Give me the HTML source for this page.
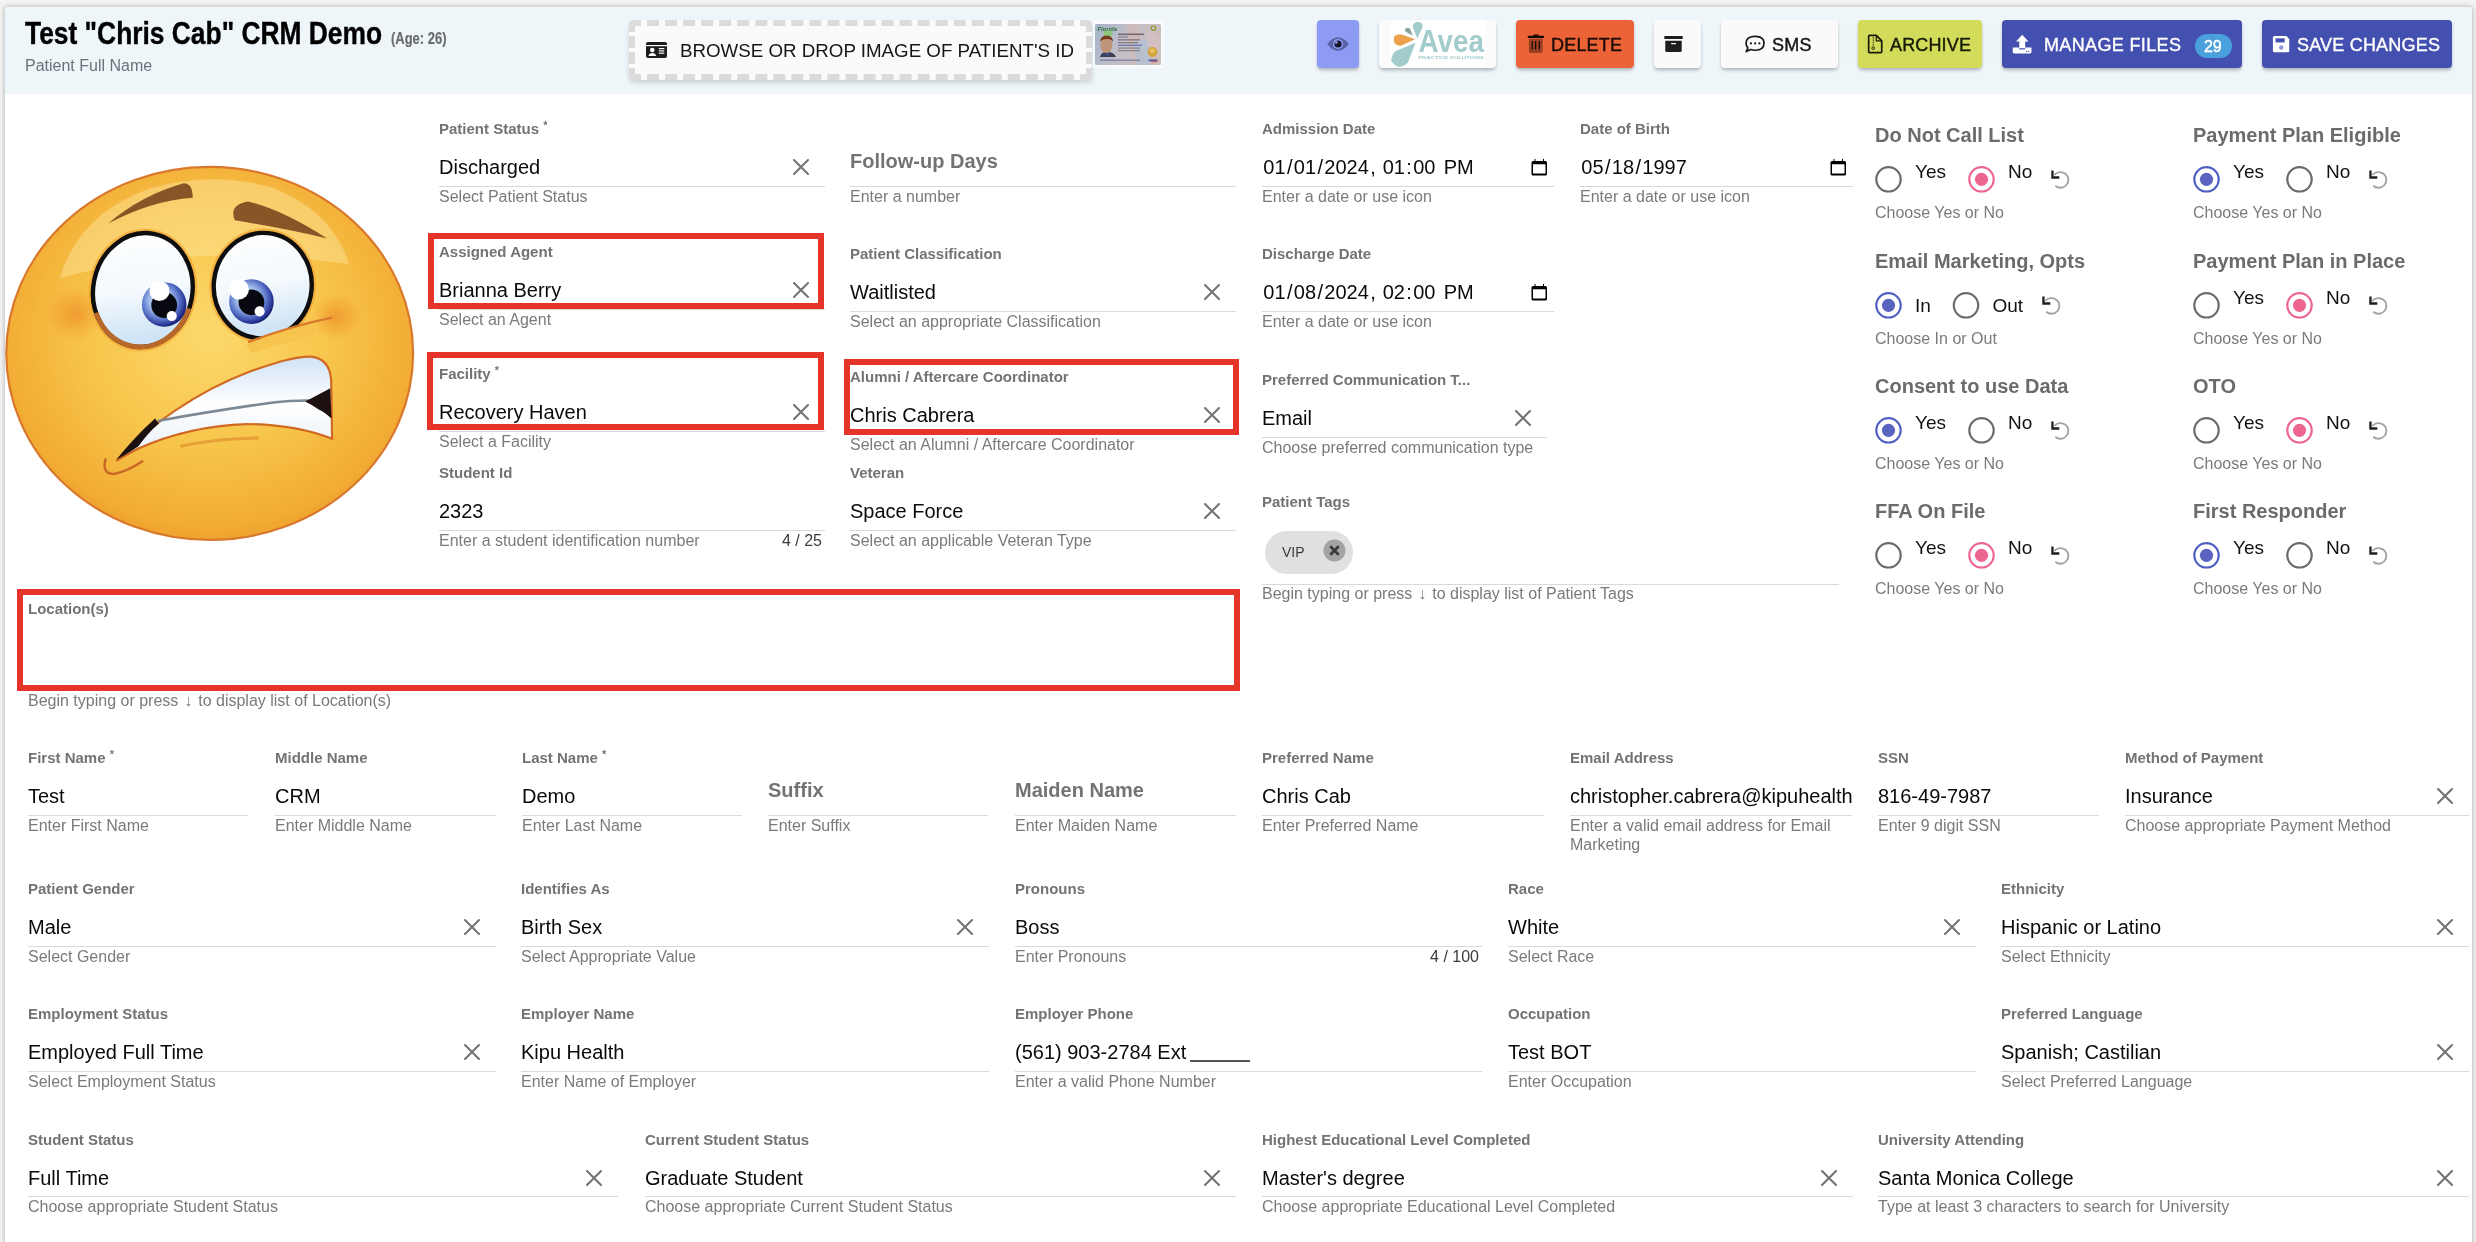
<!DOCTYPE html><html><head><meta charset="utf-8"><style>
html,body{margin:0;padding:0;-webkit-font-smoothing:antialiased;width:2476px;height:1242px;overflow:hidden;background:#f3f3f3;font-family:"Liberation Sans",sans-serif}
.t{position:absolute;white-space:nowrap;font-family:"Liberation Sans",sans-serif}
</style></head><body><div id="root" style="position:absolute;left:0;top:0;width:2476px;height:1242px;overflow:hidden;will-change:transform">
<div style="position:absolute;left:5px;top:7px;width:2467px;height:1300px;background:#fff;border-radius:3px;box-shadow:0 0 4px 1px rgba(0,0,0,0.22)"></div>
<div style="position:absolute;left:5px;top:7px;width:2467px;height:87px;background:#eef6fa;border-radius:3px 3px 0 0"></div>
<div class="t" style="left:25px;top:17px;font-size:32px;line-height:32px;font-weight:bold;color:#000;transform:scaleX(0.824);transform-origin:0 0;-webkit-text-stroke:0.4px #000">Test "Chris Cab" CRM Demo</div>
<div class="t" style="left:391px;top:31px;font-size:16px;line-height:16px;font-weight:bold;color:#6a6d70;transform:scaleX(0.81);transform-origin:0 0;-webkit-text-stroke:0.2px #6a6d70">(Age: 26)</div>
<div class="t" style="left:25px;top:58px;font-size:16px;line-height:16px;color:#6d7278;font-weight:normal;">Patient Full Name</div>
<div style="position:absolute;left:629px;top:20px;width:463px;height:60px;box-sizing:border-box;background:#fafafa;border:6px dashed #dbdbdb;border-radius:5px;box-shadow:0 3px 5px rgba(0,0,0,0.14)"></div>
<svg style="position:absolute;left:646px;top:42px" width="21" height="17" viewBox="0 0 21 17"><rect x="0" y="0" width="21" height="16" rx="2" fill="#1c1c1c"/><rect x="0" y="3" width="21" height="1.2" fill="#fafafa"/><circle cx="6.3" cy="8" r="2.3" fill="#fafafa"/><path d="M2.5 14Q3 11 6.3 11Q9.6 11 10.2 14Z" fill="#fafafa"/><rect x="12.8" y="6" width="5.5" height="1.2" fill="#fafafa"/><rect x="12.8" y="8.3" width="5.5" height="1.2" fill="#fafafa"/><rect x="12.8" y="10.6" width="5.5" height="1.2" fill="#fafafa"/></svg>
<div class="t" style="left:680px;top:41px;font-size:19px;line-height:19px;color:#161616;transform:scaleX(0.986);transform-origin:0 0">BROWSE OR DROP IMAGE OF PATIENT'S ID</div>
<div style="position:absolute;left:1317px;top:20px;width:42px;height:48px;background:#8e9bf5;border-radius:4px;box-shadow:0 3px 4px -1px rgba(0,0,0,0.2),0 2px 3px rgba(0,0,0,0.1)"></div>
<div style="position:absolute;left:1379px;top:20px;width:117px;height:48px;background:#fbfbfb;border-radius:4px;box-shadow:0 3px 4px -1px rgba(0,0,0,0.2),0 2px 3px rgba(0,0,0,0.1)"></div>
<div style="position:absolute;left:1516px;top:20px;width:118px;height:48px;background:#ec6337;border-radius:4px;box-shadow:0 3px 4px -1px rgba(0,0,0,0.2),0 2px 3px rgba(0,0,0,0.1)"></div>
<div style="position:absolute;left:1654px;top:20px;width:47px;height:48px;background:#fafafa;border-radius:4px;box-shadow:0 3px 4px -1px rgba(0,0,0,0.2),0 2px 3px rgba(0,0,0,0.1)"></div>
<div style="position:absolute;left:1721px;top:20px;width:117px;height:48px;background:#fafafa;border-radius:4px;box-shadow:0 3px 4px -1px rgba(0,0,0,0.2),0 2px 3px rgba(0,0,0,0.1)"></div>
<div style="position:absolute;left:1858px;top:20px;width:124px;height:48px;background:#d2dc5a;border-radius:4px;box-shadow:0 3px 4px -1px rgba(0,0,0,0.2),0 2px 3px rgba(0,0,0,0.1)"></div>
<div style="position:absolute;left:2002px;top:20px;width:240px;height:48px;background:#4450b0;border-radius:4px;box-shadow:0 3px 4px -1px rgba(0,0,0,0.2),0 2px 3px rgba(0,0,0,0.1)"></div>
<div style="position:absolute;left:2262px;top:20px;width:190px;height:48px;background:#4450b0;border-radius:4px;box-shadow:0 3px 4px -1px rgba(0,0,0,0.2),0 2px 3px rgba(0,0,0,0.1)"></div>
<div class="t" style="left:1551px;top:36px;font-size:18px;line-height:18px;color:#1b0c06;font-weight:normal;letter-spacing:0.2px;-webkit-text-stroke:0.4px #1b0c06">DELETE</div>
<div class="t" style="left:1772px;top:36px;font-size:18px;line-height:18px;color:#161616;font-weight:normal;letter-spacing:0.2px;-webkit-text-stroke:0.4px #161616">SMS</div>
<div class="t" style="left:1890px;top:36px;font-size:18px;line-height:18px;color:#161a05;font-weight:normal;letter-spacing:0.15px;-webkit-text-stroke:0.4px #161a05">ARCHIVE</div>
<div class="t" style="left:2044px;top:36px;font-size:18px;line-height:18px;color:#fff;font-weight:normal;letter-spacing:0.35px;-webkit-text-stroke:0.35px #fff">MANAGE FILES</div>
<div class="t" style="left:2297px;top:36px;font-size:18px;line-height:18px;color:#fff;font-weight:normal;letter-spacing:0.2px;-webkit-text-stroke:0.35px #fff">SAVE CHANGES</div>
<div style="position:absolute;left:2195px;top:34px;width:37px;height:24px;border-radius:12px;background:#4aa0dc"></div>
<div class="t" style="left:2204px;top:39px;font-size:16px;line-height:16px;color:#fff;font-weight:normal;letter-spacing:-0.2px;-webkit-text-stroke:0.45px #fff">29</div>
<div class="t" style="left:439px;top:121px;font-size:15px;line-height:15px;color:#737373;font-weight:bold;">Patient Status <span style="font-size:11px;position:relative;top:-5px">*</span></div>
<div class="t" style="left:439px;top:157px;font-size:20px;line-height:20px;color:#0a0a0a;font-weight:normal;">Discharged</div>
<div style="position:absolute;left:439px;top:186px;width:386px;height:1px;background:#d9d9d9"></div>
<div class="t" style="left:439px;top:189px;font-size:16px;line-height:16px;color:#7a7a7a;font-weight:normal;">Select Patient Status</div>
<svg style="position:absolute;left:792px;top:158px" width="18" height="18" viewBox="0 0 18 18"><path d="M2 2L16 16M16 2L2 16" stroke="#737373" stroke-width="2.1" stroke-linecap="round"/></svg>
<div class="t" style="left:439px;top:244px;font-size:15px;line-height:15px;color:#737373;font-weight:bold;">Assigned Agent</div>
<div class="t" style="left:439px;top:280px;font-size:20px;line-height:20px;color:#0a0a0a;font-weight:normal;">Brianna Berry</div>
<div style="position:absolute;left:439px;top:309px;width:386px;height:1px;background:#d9d9d9"></div>
<div class="t" style="left:439px;top:312px;font-size:16px;line-height:16px;color:#7a7a7a;font-weight:normal;">Select an Agent</div>
<svg style="position:absolute;left:792px;top:281px" width="18" height="18" viewBox="0 0 18 18"><path d="M2 2L16 16M16 2L2 16" stroke="#737373" stroke-width="2.1" stroke-linecap="round"/></svg>
<div class="t" style="left:439px;top:366px;font-size:15px;line-height:15px;color:#737373;font-weight:bold;">Facility <span style="font-size:11px;position:relative;top:-5px">*</span></div>
<div class="t" style="left:439px;top:402px;font-size:20px;line-height:20px;color:#0a0a0a;font-weight:normal;">Recovery Haven</div>
<div style="position:absolute;left:439px;top:431px;width:386px;height:1px;background:#d9d9d9"></div>
<div class="t" style="left:439px;top:434px;font-size:16px;line-height:16px;color:#7a7a7a;font-weight:normal;">Select a Facility</div>
<svg style="position:absolute;left:792px;top:403px" width="18" height="18" viewBox="0 0 18 18"><path d="M2 2L16 16M16 2L2 16" stroke="#737373" stroke-width="2.1" stroke-linecap="round"/></svg>
<div class="t" style="left:439px;top:465px;font-size:15px;line-height:15px;color:#737373;font-weight:bold;">Student Id</div>
<div class="t" style="left:439px;top:501px;font-size:20px;line-height:20px;color:#0a0a0a;font-weight:normal;">2323</div>
<div style="position:absolute;left:439px;top:530px;width:386px;height:1px;background:#d9d9d9"></div>
<div class="t" style="left:439px;top:533px;font-size:16px;line-height:16px;color:#7a7a7a;font-weight:normal;">Enter a student identification number</div>
<div class="t" style="right:1654px;top:533px;font-size:16px;line-height:16px;color:#3c3c3c;font-weight:normal;text-align:right;">4 / 25</div>
<div class="t" style="left:850px;top:151px;font-size:20px;line-height:20px;color:#737373;font-weight:bold;">Follow-up Days</div>
<div style="position:absolute;left:850px;top:186px;width:386px;height:1px;background:#d9d9d9"></div>
<div class="t" style="left:850px;top:189px;font-size:16px;line-height:16px;color:#7a7a7a;font-weight:normal;">Enter a number</div>
<div class="t" style="left:850px;top:246px;font-size:15px;line-height:15px;color:#737373;font-weight:bold;">Patient Classification</div>
<div class="t" style="left:850px;top:282px;font-size:20px;line-height:20px;color:#0a0a0a;font-weight:normal;">Waitlisted</div>
<div style="position:absolute;left:850px;top:311px;width:386px;height:1px;background:#d9d9d9"></div>
<div class="t" style="left:850px;top:314px;font-size:16px;line-height:16px;color:#7a7a7a;font-weight:normal;">Select an appropriate Classification</div>
<svg style="position:absolute;left:1203px;top:283px" width="18" height="18" viewBox="0 0 18 18"><path d="M2 2L16 16M16 2L2 16" stroke="#737373" stroke-width="2.1" stroke-linecap="round"/></svg>
<div class="t" style="left:850px;top:369px;font-size:15px;line-height:15px;color:#737373;font-weight:bold;">Alumni / Aftercare Coordinator</div>
<div class="t" style="left:850px;top:405px;font-size:20px;line-height:20px;color:#0a0a0a;font-weight:normal;">Chris Cabrera</div>
<div style="position:absolute;left:850px;top:434px;width:386px;height:1px;background:#d9d9d9"></div>
<div class="t" style="left:850px;top:437px;font-size:16px;line-height:16px;color:#7a7a7a;font-weight:normal;">Select an Alumni / Aftercare Coordinator</div>
<svg style="position:absolute;left:1203px;top:406px" width="18" height="18" viewBox="0 0 18 18"><path d="M2 2L16 16M16 2L2 16" stroke="#737373" stroke-width="2.1" stroke-linecap="round"/></svg>
<div class="t" style="left:850px;top:465px;font-size:15px;line-height:15px;color:#737373;font-weight:bold;">Veteran</div>
<div class="t" style="left:850px;top:501px;font-size:20px;line-height:20px;color:#0a0a0a;font-weight:normal;">Space Force</div>
<div style="position:absolute;left:850px;top:530px;width:386px;height:1px;background:#d9d9d9"></div>
<div class="t" style="left:850px;top:533px;font-size:16px;line-height:16px;color:#7a7a7a;font-weight:normal;">Select an applicable Veteran Type</div>
<svg style="position:absolute;left:1203px;top:502px" width="18" height="18" viewBox="0 0 18 18"><path d="M2 2L16 16M16 2L2 16" stroke="#737373" stroke-width="2.1" stroke-linecap="round"/></svg>
<div class="t" style="left:1262px;top:121px;font-size:15px;line-height:15px;color:#737373;font-weight:bold;">Admission Date</div>
<div class="t" style="left:1262px;top:157px;font-size:20px;line-height:20px;color:#0a0a0a;font-weight:normal;"><span style="padding:0 1.35px">01</span>/<span style="padding:0 1.35px">01</span>/<span style="padding:0 1.35px">2024</span>, <span style="padding:0 1.35px">01</span>:<span style="padding:0 1.35px">00</span> <span style="padding:0 1.35px">PM</span></div>
<div style="position:absolute;left:1262px;top:186px;width:292px;height:1px;background:#d9d9d9"></div>
<div class="t" style="left:1262px;top:189px;font-size:16px;line-height:16px;color:#7a7a7a;font-weight:normal;">Enter a date or use icon</div>
<svg style="position:absolute;left:1531px;top:158px" width="17" height="18" viewBox="0 0 17 18"><path d="M3.5 1.2L4.5 0.8V3H12V1L13 0.8V3H14.5A1.5 1.5 0 0 1 16 4.5V16A1.5 1.5 0 0 1 14.5 17.5H2A1.5 1.5 0 0 1 0.5 16V4.5A1.5 1.5 0 0 1 2 3H3.5Z M2 6.2V15.6H14.5V6.2Z" fill="#000" fill-rule="evenodd"/></svg>
<div class="t" style="left:1262px;top:246px;font-size:15px;line-height:15px;color:#737373;font-weight:bold;">Discharge Date</div>
<div class="t" style="left:1262px;top:282px;font-size:20px;line-height:20px;color:#0a0a0a;font-weight:normal;"><span style="padding:0 1.35px">01</span>/<span style="padding:0 1.35px">08</span>/<span style="padding:0 1.35px">2024</span>, <span style="padding:0 1.35px">02</span>:<span style="padding:0 1.35px">00</span> <span style="padding:0 1.35px">PM</span></div>
<div style="position:absolute;left:1262px;top:311px;width:292px;height:1px;background:#d9d9d9"></div>
<div class="t" style="left:1262px;top:314px;font-size:16px;line-height:16px;color:#7a7a7a;font-weight:normal;">Enter a date or use icon</div>
<svg style="position:absolute;left:1531px;top:283px" width="17" height="18" viewBox="0 0 17 18"><path d="M3.5 1.2L4.5 0.8V3H12V1L13 0.8V3H14.5A1.5 1.5 0 0 1 16 4.5V16A1.5 1.5 0 0 1 14.5 17.5H2A1.5 1.5 0 0 1 0.5 16V4.5A1.5 1.5 0 0 1 2 3H3.5Z M2 6.2V15.6H14.5V6.2Z" fill="#000" fill-rule="evenodd"/></svg>
<div class="t" style="left:1262px;top:372px;font-size:15px;line-height:15px;color:#737373;font-weight:bold;">Preferred Communication T...</div>
<div class="t" style="left:1262px;top:408px;font-size:20px;line-height:20px;color:#0a0a0a;font-weight:normal;">Email</div>
<div style="position:absolute;left:1262px;top:437px;width:285px;height:1px;background:#d9d9d9"></div>
<div class="t" style="left:1262px;top:440px;font-size:16px;line-height:16px;color:#7a7a7a;font-weight:normal;">Choose preferred communication type</div>
<svg style="position:absolute;left:1514px;top:409px" width="18" height="18" viewBox="0 0 18 18"><path d="M2 2L16 16M16 2L2 16" stroke="#737373" stroke-width="2.1" stroke-linecap="round"/></svg>
<div class="t" style="left:1580px;top:121px;font-size:15px;line-height:15px;color:#737373;font-weight:bold;">Date of Birth</div>
<div class="t" style="left:1580px;top:157px;font-size:20px;line-height:20px;color:#0a0a0a;font-weight:normal;"><span style="padding:0 1.35px">05</span>/<span style="padding:0 1.35px">18</span>/<span style="padding:0 1.35px">1997</span></div>
<div style="position:absolute;left:1580px;top:186px;width:273px;height:1px;background:#d9d9d9"></div>
<div class="t" style="left:1580px;top:189px;font-size:16px;line-height:16px;color:#7a7a7a;font-weight:normal;">Enter a date or use icon</div>
<svg style="position:absolute;left:1830px;top:158px" width="17" height="18" viewBox="0 0 17 18"><path d="M3.5 1.2L4.5 0.8V3H12V1L13 0.8V3H14.5A1.5 1.5 0 0 1 16 4.5V16A1.5 1.5 0 0 1 14.5 17.5H2A1.5 1.5 0 0 1 0.5 16V4.5A1.5 1.5 0 0 1 2 3H3.5Z M2 6.2V15.6H14.5V6.2Z" fill="#000" fill-rule="evenodd"/></svg>
<div class="t" style="left:1262px;top:494px;font-size:15px;line-height:15px;color:#737373;font-weight:bold;">Patient Tags</div>
<div style="position:absolute;left:1265px;top:531px;width:88px;height:43px;border-radius:22px;background:#e0e0e0"></div>
<div class="t" style="left:1282px;top:545px;font-size:14px;line-height:14px;color:#3a3a3a;font-weight:normal;">VIP</div>
<svg style="position:absolute;left:1323px;top:539px" width="23" height="23" viewBox="0 0 23 23"><circle cx="11.5" cy="11.5" r="11" fill="#a3a3a3"/><path d="M7.3 7.3L15.7 15.7M15.7 7.3L7.3 15.7" stroke="#3a3a3a" stroke-width="2.8" stroke-linecap="butt"/></svg>
<div style="position:absolute;left:1262px;top:584px;width:577px;height:1px;background:#d9d9d9"></div>
<div class="t" style="left:1262px;top:586px;font-size:16px;line-height:16px;color:#7a7a7a;font-weight:normal;">Begin typing or press <span style="margin:0 1.5px">&#8595;</span> to display list of Patient Tags</div>
<div class="t" style="left:28px;top:601px;font-size:15px;line-height:15px;color:#737373;font-weight:bold;">Location(s)</div>
<div class="t" style="left:28px;top:693px;font-size:16px;line-height:16px;color:#7a7a7a;font-weight:normal;">Begin typing or press <span style="margin:0 1.5px">&#8595;</span> to display list of Location(s)</div>
<div class="t" style="left:28px;top:750px;font-size:15px;line-height:15px;color:#737373;font-weight:bold;">First Name <span style="font-size:11px;position:relative;top:-5px">*</span></div>
<div class="t" style="left:28px;top:786px;font-size:20px;line-height:20px;color:#0a0a0a;font-weight:normal;">Test</div>
<div style="position:absolute;left:28px;top:815px;width:220px;height:1px;background:#d9d9d9"></div>
<div class="t" style="left:28px;top:818px;font-size:16px;line-height:16px;color:#7a7a7a;font-weight:normal;">Enter First Name</div>
<div class="t" style="left:275px;top:750px;font-size:15px;line-height:15px;color:#737373;font-weight:bold;">Middle Name</div>
<div class="t" style="left:275px;top:786px;font-size:20px;line-height:20px;color:#0a0a0a;font-weight:normal;">CRM</div>
<div style="position:absolute;left:275px;top:815px;width:221px;height:1px;background:#d9d9d9"></div>
<div class="t" style="left:275px;top:818px;font-size:16px;line-height:16px;color:#7a7a7a;font-weight:normal;">Enter Middle Name</div>
<div class="t" style="left:522px;top:750px;font-size:15px;line-height:15px;color:#737373;font-weight:bold;">Last Name <span style="font-size:11px;position:relative;top:-5px">*</span></div>
<div class="t" style="left:522px;top:786px;font-size:20px;line-height:20px;color:#0a0a0a;font-weight:normal;">Demo</div>
<div style="position:absolute;left:522px;top:815px;width:220px;height:1px;background:#d9d9d9"></div>
<div class="t" style="left:522px;top:818px;font-size:16px;line-height:16px;color:#7a7a7a;font-weight:normal;">Enter Last Name</div>
<div class="t" style="left:768px;top:780px;font-size:20px;line-height:20px;color:#737373;font-weight:bold;">Suffix</div>
<div style="position:absolute;left:768px;top:815px;width:220px;height:1px;background:#d9d9d9"></div>
<div class="t" style="left:768px;top:818px;font-size:16px;line-height:16px;color:#7a7a7a;font-weight:normal;">Enter Suffix</div>
<div class="t" style="left:1015px;top:780px;font-size:20px;line-height:20px;color:#737373;font-weight:bold;">Maiden Name</div>
<div style="position:absolute;left:1015px;top:815px;width:221px;height:1px;background:#d9d9d9"></div>
<div class="t" style="left:1015px;top:818px;font-size:16px;line-height:16px;color:#7a7a7a;font-weight:normal;">Enter Maiden Name</div>
<div class="t" style="left:1262px;top:750px;font-size:15px;line-height:15px;color:#737373;font-weight:bold;">Preferred Name</div>
<div class="t" style="left:1262px;top:786px;font-size:20px;line-height:20px;color:#0a0a0a;font-weight:normal;">Chris Cab</div>
<div style="position:absolute;left:1262px;top:815px;width:282px;height:1px;background:#d9d9d9"></div>
<div class="t" style="left:1262px;top:818px;font-size:16px;line-height:16px;color:#7a7a7a;font-weight:normal;">Enter Preferred Name</div>
<div class="t" style="left:1570px;top:750px;font-size:15px;line-height:15px;color:#737373;font-weight:bold;">Email Address</div>
<div class="t" style="left:1570px;top:786px;font-size:20px;line-height:20px;color:#0a0a0a;font-weight:normal;">christopher.cabrera@kipuhealth</div>
<div style="position:absolute;left:1570px;top:815px;width:282px;height:1px;background:#d9d9d9"></div>
<div class="t" style="left:1570px;top:818px;font-size:16px;line-height:16px;color:#7a7a7a;font-weight:normal;">Enter a valid email address for Email</div>
<div class="t" style="left:1570px;top:837px;font-size:16px;line-height:16px;color:#7a7a7a;font-weight:normal;">Marketing</div>
<div class="t" style="left:1878px;top:750px;font-size:15px;line-height:15px;color:#737373;font-weight:bold;">SSN</div>
<div class="t" style="left:1878px;top:786px;font-size:20px;line-height:20px;color:#0a0a0a;font-weight:normal;">816-49-7987</div>
<div style="position:absolute;left:1878px;top:815px;width:221px;height:1px;background:#d9d9d9"></div>
<div class="t" style="left:1878px;top:818px;font-size:16px;line-height:16px;color:#7a7a7a;font-weight:normal;">Enter 9 digit SSN</div>
<div class="t" style="left:2125px;top:750px;font-size:15px;line-height:15px;color:#737373;font-weight:bold;">Method of Payment</div>
<div class="t" style="left:2125px;top:786px;font-size:20px;line-height:20px;color:#0a0a0a;font-weight:normal;">Insurance</div>
<div style="position:absolute;left:2125px;top:815px;width:344px;height:1px;background:#d9d9d9"></div>
<div class="t" style="left:2125px;top:818px;font-size:16px;line-height:16px;color:#7a7a7a;font-weight:normal;">Choose appropriate Payment Method</div>
<svg style="position:absolute;left:2436px;top:787px" width="18" height="18" viewBox="0 0 18 18"><path d="M2 2L16 16M16 2L2 16" stroke="#737373" stroke-width="2.1" stroke-linecap="round"/></svg>
<div class="t" style="left:28px;top:881px;font-size:15px;line-height:15px;color:#737373;font-weight:bold;">Patient Gender</div>
<div class="t" style="left:28px;top:917px;font-size:20px;line-height:20px;color:#0a0a0a;font-weight:normal;">Male</div>
<div style="position:absolute;left:28px;top:946px;width:468px;height:1px;background:#d9d9d9"></div>
<div class="t" style="left:28px;top:949px;font-size:16px;line-height:16px;color:#7a7a7a;font-weight:normal;">Select Gender</div>
<svg style="position:absolute;left:463px;top:918px" width="18" height="18" viewBox="0 0 18 18"><path d="M2 2L16 16M16 2L2 16" stroke="#737373" stroke-width="2.1" stroke-linecap="round"/></svg>
<div class="t" style="left:521px;top:881px;font-size:15px;line-height:15px;color:#737373;font-weight:bold;">Identifies As</div>
<div class="t" style="left:521px;top:917px;font-size:20px;line-height:20px;color:#0a0a0a;font-weight:normal;">Birth Sex</div>
<div style="position:absolute;left:521px;top:946px;width:468px;height:1px;background:#d9d9d9"></div>
<div class="t" style="left:521px;top:949px;font-size:16px;line-height:16px;color:#7a7a7a;font-weight:normal;">Select Appropriate Value</div>
<svg style="position:absolute;left:956px;top:918px" width="18" height="18" viewBox="0 0 18 18"><path d="M2 2L16 16M16 2L2 16" stroke="#737373" stroke-width="2.1" stroke-linecap="round"/></svg>
<div class="t" style="left:1015px;top:881px;font-size:15px;line-height:15px;color:#737373;font-weight:bold;">Pronouns</div>
<div class="t" style="left:1015px;top:917px;font-size:20px;line-height:20px;color:#0a0a0a;font-weight:normal;">Boss</div>
<div style="position:absolute;left:1015px;top:946px;width:467px;height:1px;background:#d9d9d9"></div>
<div class="t" style="left:1015px;top:949px;font-size:16px;line-height:16px;color:#7a7a7a;font-weight:normal;">Enter Pronouns</div>
<div class="t" style="right:997px;top:949px;font-size:16px;line-height:16px;color:#3c3c3c;font-weight:normal;text-align:right;">4 / 100</div>
<div class="t" style="left:1508px;top:881px;font-size:15px;line-height:15px;color:#737373;font-weight:bold;">Race</div>
<div class="t" style="left:1508px;top:917px;font-size:20px;line-height:20px;color:#0a0a0a;font-weight:normal;">White</div>
<div style="position:absolute;left:1508px;top:946px;width:468px;height:1px;background:#d9d9d9"></div>
<div class="t" style="left:1508px;top:949px;font-size:16px;line-height:16px;color:#7a7a7a;font-weight:normal;">Select Race</div>
<svg style="position:absolute;left:1943px;top:918px" width="18" height="18" viewBox="0 0 18 18"><path d="M2 2L16 16M16 2L2 16" stroke="#737373" stroke-width="2.1" stroke-linecap="round"/></svg>
<div class="t" style="left:2001px;top:881px;font-size:15px;line-height:15px;color:#737373;font-weight:bold;">Ethnicity</div>
<div class="t" style="left:2001px;top:917px;font-size:20px;line-height:20px;color:#0a0a0a;font-weight:normal;">Hispanic or Latino</div>
<div style="position:absolute;left:2001px;top:946px;width:468px;height:1px;background:#d9d9d9"></div>
<div class="t" style="left:2001px;top:949px;font-size:16px;line-height:16px;color:#7a7a7a;font-weight:normal;">Select Ethnicity</div>
<svg style="position:absolute;left:2436px;top:918px" width="18" height="18" viewBox="0 0 18 18"><path d="M2 2L16 16M16 2L2 16" stroke="#737373" stroke-width="2.1" stroke-linecap="round"/></svg>
<div class="t" style="left:28px;top:1006px;font-size:15px;line-height:15px;color:#737373;font-weight:bold;">Employment Status</div>
<div class="t" style="left:28px;top:1042px;font-size:20px;line-height:20px;color:#0a0a0a;font-weight:normal;">Employed Full Time</div>
<div style="position:absolute;left:28px;top:1071px;width:468px;height:1px;background:#d9d9d9"></div>
<div class="t" style="left:28px;top:1074px;font-size:16px;line-height:16px;color:#7a7a7a;font-weight:normal;">Select Employment Status</div>
<svg style="position:absolute;left:463px;top:1043px" width="18" height="18" viewBox="0 0 18 18"><path d="M2 2L16 16M16 2L2 16" stroke="#737373" stroke-width="2.1" stroke-linecap="round"/></svg>
<div class="t" style="left:521px;top:1006px;font-size:15px;line-height:15px;color:#737373;font-weight:bold;">Employer Name</div>
<div class="t" style="left:521px;top:1042px;font-size:20px;line-height:20px;color:#0a0a0a;font-weight:normal;">Kipu Health</div>
<div style="position:absolute;left:521px;top:1071px;width:468px;height:1px;background:#d9d9d9"></div>
<div class="t" style="left:521px;top:1074px;font-size:16px;line-height:16px;color:#7a7a7a;font-weight:normal;">Enter Name of Employer</div>
<div class="t" style="left:1015px;top:1006px;font-size:15px;line-height:15px;color:#737373;font-weight:bold;">Employer Phone</div>
<div class="t" style="left:1015px;top:1042px;font-size:20px;line-height:20px;color:#0a0a0a;font-weight:normal;">(561) 903-2784 Ext</div>
<div style="position:absolute;left:1015px;top:1071px;width:467px;height:1px;background:#d9d9d9"></div>
<div class="t" style="left:1015px;top:1074px;font-size:16px;line-height:16px;color:#7a7a7a;font-weight:normal;">Enter a valid Phone Number</div>
<div style="position:absolute;left:1190px;top:1060px;width:60px;height:2px;background:#555"></div>
<div class="t" style="left:1508px;top:1006px;font-size:15px;line-height:15px;color:#737373;font-weight:bold;">Occupation</div>
<div class="t" style="left:1508px;top:1042px;font-size:20px;line-height:20px;color:#0a0a0a;font-weight:normal;">Test BOT</div>
<div style="position:absolute;left:1508px;top:1071px;width:468px;height:1px;background:#d9d9d9"></div>
<div class="t" style="left:1508px;top:1074px;font-size:16px;line-height:16px;color:#7a7a7a;font-weight:normal;">Enter Occupation</div>
<div class="t" style="left:2001px;top:1006px;font-size:15px;line-height:15px;color:#737373;font-weight:bold;">Preferred Language</div>
<div class="t" style="left:2001px;top:1042px;font-size:20px;line-height:20px;color:#0a0a0a;font-weight:normal;">Spanish; Castilian</div>
<div style="position:absolute;left:2001px;top:1071px;width:468px;height:1px;background:#d9d9d9"></div>
<div class="t" style="left:2001px;top:1074px;font-size:16px;line-height:16px;color:#7a7a7a;font-weight:normal;">Select Preferred Language</div>
<svg style="position:absolute;left:2436px;top:1043px" width="18" height="18" viewBox="0 0 18 18"><path d="M2 2L16 16M16 2L2 16" stroke="#737373" stroke-width="2.1" stroke-linecap="round"/></svg>
<div class="t" style="left:28px;top:1132px;font-size:15px;line-height:15px;color:#737373;font-weight:bold;">Student Status</div>
<div class="t" style="left:28px;top:1168px;font-size:20px;line-height:20px;color:#0a0a0a;font-weight:normal;">Full Time</div>
<div style="position:absolute;left:28px;top:1196px;width:590px;height:1px;background:#d9d9d9"></div>
<div class="t" style="left:28px;top:1199px;font-size:16px;line-height:16px;color:#7a7a7a;font-weight:normal;">Choose appropriate Student Status</div>
<svg style="position:absolute;left:585px;top:1169px" width="18" height="18" viewBox="0 0 18 18"><path d="M2 2L16 16M16 2L2 16" stroke="#737373" stroke-width="2.1" stroke-linecap="round"/></svg>
<div class="t" style="left:645px;top:1132px;font-size:15px;line-height:15px;color:#737373;font-weight:bold;">Current Student Status</div>
<div class="t" style="left:645px;top:1168px;font-size:20px;line-height:20px;color:#0a0a0a;font-weight:normal;">Graduate Student</div>
<div style="position:absolute;left:645px;top:1196px;width:591px;height:1px;background:#d9d9d9"></div>
<div class="t" style="left:645px;top:1199px;font-size:16px;line-height:16px;color:#7a7a7a;font-weight:normal;">Choose appropriate Current Student Status</div>
<svg style="position:absolute;left:1203px;top:1169px" width="18" height="18" viewBox="0 0 18 18"><path d="M2 2L16 16M16 2L2 16" stroke="#737373" stroke-width="2.1" stroke-linecap="round"/></svg>
<div class="t" style="left:1262px;top:1132px;font-size:15px;line-height:15px;color:#737373;font-weight:bold;">Highest Educational Level Completed</div>
<div class="t" style="left:1262px;top:1168px;font-size:20px;line-height:20px;color:#0a0a0a;font-weight:normal;">Master's degree</div>
<div style="position:absolute;left:1262px;top:1196px;width:591px;height:1px;background:#d9d9d9"></div>
<div class="t" style="left:1262px;top:1199px;font-size:16px;line-height:16px;color:#7a7a7a;font-weight:normal;">Choose appropriate Educational Level Completed</div>
<svg style="position:absolute;left:1820px;top:1169px" width="18" height="18" viewBox="0 0 18 18"><path d="M2 2L16 16M16 2L2 16" stroke="#737373" stroke-width="2.1" stroke-linecap="round"/></svg>
<div class="t" style="left:1878px;top:1132px;font-size:15px;line-height:15px;color:#737373;font-weight:bold;">University Attending</div>
<div class="t" style="left:1878px;top:1168px;font-size:20px;line-height:20px;color:#0a0a0a;font-weight:normal;">Santa Monica College</div>
<div style="position:absolute;left:1878px;top:1196px;width:591px;height:1px;background:#d9d9d9"></div>
<div class="t" style="left:1878px;top:1199px;font-size:16px;line-height:16px;color:#7a7a7a;font-weight:normal;">Type at least 3 characters to search for University</div>
<svg style="position:absolute;left:2436px;top:1169px" width="18" height="18" viewBox="0 0 18 18"><path d="M2 2L16 16M16 2L2 16" stroke="#737373" stroke-width="2.1" stroke-linecap="round"/></svg>
<div class="t" style="left:1875px;top:125px;font-size:20px;line-height:20px;color:#6b6b6b;font-weight:bold;">Do Not Call List</div>
<svg style="position:absolute;left:1874px;top:165px" width="28" height="28"><circle cx="14.5" cy="14.300000000000011" r="12.2" fill="none" stroke="#6b6b6b" stroke-width="2.2"/></svg>
<div class="t" style="left:1915px;top:162px;font-size:19px;line-height:19px;color:#111;font-weight:normal;">Yes</div>
<svg style="position:absolute;left:1967px;top:165px" width="28" height="28"><circle cx="14.5" cy="14.300000000000011" r="12.2" fill="none" stroke="#ec6690" stroke-width="2.2"/><circle cx="14.5" cy="14.300000000000011" r="6.6" fill="#ec6690"/></svg>
<div class="t" style="left:2008px;top:162px;font-size:19px;line-height:19px;color:#111;font-weight:normal;">No</div>
<svg style="position:absolute;left:2048px;top:167px" width="24" height="24" viewBox="0 0 24 24"><g transform="translate(0.5 0.9000000000000057)"><path d="M5.81 7.17A7.85 7.85 0 1 1 6.75 17.83" fill="none" stroke="#a3a3a3" stroke-width="1.8"/><path d="M2.8 2.6H5.1V8.4H10.8V10.8H2.8Z" fill="#1e1e1e"/></g></svg>
<div class="t" style="left:1875px;top:205px;font-size:16px;line-height:16px;color:#7a7a7a;font-weight:normal;">Choose Yes or No</div>
<div class="t" style="left:1875px;top:251px;font-size:20px;line-height:20px;color:#6b6b6b;font-weight:bold;">Email Marketing, Opts</div>
<svg style="position:absolute;left:1874px;top:291px" width="28" height="28"><circle cx="14.5" cy="14.300000000000011" r="12.2" fill="none" stroke="#5060c2" stroke-width="2.2"/><circle cx="14.5" cy="14.300000000000011" r="6.6" fill="#5864bf"/></svg>
<div class="t" style="left:1915px;top:296px;font-size:19px;line-height:19px;color:#111;font-weight:normal;">In</div>
<svg style="position:absolute;left:1952px;top:291px" width="28" height="28"><circle cx="14.0" cy="14.300000000000011" r="12.2" fill="none" stroke="#6b6b6b" stroke-width="2.2"/></svg>
<div class="t" style="left:1992.5px;top:296px;font-size:19px;line-height:19px;color:#111;font-weight:normal;">Out</div>
<svg style="position:absolute;left:2039px;top:293px" width="24" height="24" viewBox="0 0 24 24"><g transform="translate(0.5 0.9000000000000341)"><path d="M5.81 7.17A7.85 7.85 0 1 1 6.75 17.83" fill="none" stroke="#a3a3a3" stroke-width="1.8"/><path d="M2.8 2.6H5.1V8.4H10.8V10.8H2.8Z" fill="#1e1e1e"/></g></svg>
<div class="t" style="left:1875px;top:331px;font-size:16px;line-height:16px;color:#7a7a7a;font-weight:normal;">Choose In or Out</div>
<div class="t" style="left:1875px;top:376px;font-size:20px;line-height:20px;color:#6b6b6b;font-weight:bold;">Consent to use Data</div>
<svg style="position:absolute;left:1874px;top:416px" width="28" height="28"><circle cx="14.5" cy="14.300000000000011" r="12.2" fill="none" stroke="#5060c2" stroke-width="2.2"/><circle cx="14.5" cy="14.300000000000011" r="6.6" fill="#5864bf"/></svg>
<div class="t" style="left:1915px;top:413px;font-size:19px;line-height:19px;color:#111;font-weight:normal;">Yes</div>
<svg style="position:absolute;left:1967px;top:416px" width="28" height="28"><circle cx="14.5" cy="14.300000000000011" r="12.2" fill="none" stroke="#6b6b6b" stroke-width="2.2"/></svg>
<div class="t" style="left:2008px;top:413px;font-size:19px;line-height:19px;color:#111;font-weight:normal;">No</div>
<svg style="position:absolute;left:2048px;top:418px" width="24" height="24" viewBox="0 0 24 24"><g transform="translate(0.5 0.9000000000000341)"><path d="M5.81 7.17A7.85 7.85 0 1 1 6.75 17.83" fill="none" stroke="#a3a3a3" stroke-width="1.8"/><path d="M2.8 2.6H5.1V8.4H10.8V10.8H2.8Z" fill="#1e1e1e"/></g></svg>
<div class="t" style="left:1875px;top:456px;font-size:16px;line-height:16px;color:#7a7a7a;font-weight:normal;">Choose Yes or No</div>
<div class="t" style="left:1875px;top:501px;font-size:20px;line-height:20px;color:#6b6b6b;font-weight:bold;">FFA On File</div>
<svg style="position:absolute;left:1874px;top:541px" width="28" height="28"><circle cx="14.5" cy="14.299999999999955" r="12.2" fill="none" stroke="#6b6b6b" stroke-width="2.2"/></svg>
<div class="t" style="left:1915px;top:538px;font-size:19px;line-height:19px;color:#111;font-weight:normal;">Yes</div>
<svg style="position:absolute;left:1967px;top:541px" width="28" height="28"><circle cx="14.5" cy="14.299999999999955" r="12.2" fill="none" stroke="#ec6690" stroke-width="2.2"/><circle cx="14.5" cy="14.299999999999955" r="6.6" fill="#ec6690"/></svg>
<div class="t" style="left:2008px;top:538px;font-size:19px;line-height:19px;color:#111;font-weight:normal;">No</div>
<svg style="position:absolute;left:2048px;top:543px" width="24" height="24" viewBox="0 0 24 24"><g transform="translate(0.5 0.8999999999999773)"><path d="M5.81 7.17A7.85 7.85 0 1 1 6.75 17.83" fill="none" stroke="#a3a3a3" stroke-width="1.8"/><path d="M2.8 2.6H5.1V8.4H10.8V10.8H2.8Z" fill="#1e1e1e"/></g></svg>
<div class="t" style="left:1875px;top:581px;font-size:16px;line-height:16px;color:#7a7a7a;font-weight:normal;">Choose Yes or No</div>
<div class="t" style="left:2193px;top:125px;font-size:20px;line-height:20px;color:#6b6b6b;font-weight:bold;">Payment Plan Eligible</div>
<svg style="position:absolute;left:2192px;top:165px" width="28" height="28"><circle cx="14.5" cy="14.300000000000011" r="12.2" fill="none" stroke="#5060c2" stroke-width="2.2"/><circle cx="14.5" cy="14.300000000000011" r="6.6" fill="#5864bf"/></svg>
<div class="t" style="left:2233px;top:162px;font-size:19px;line-height:19px;color:#111;font-weight:normal;">Yes</div>
<svg style="position:absolute;left:2285px;top:165px" width="28" height="28"><circle cx="14.5" cy="14.300000000000011" r="12.2" fill="none" stroke="#6b6b6b" stroke-width="2.2"/></svg>
<div class="t" style="left:2326px;top:162px;font-size:19px;line-height:19px;color:#111;font-weight:normal;">No</div>
<svg style="position:absolute;left:2366px;top:167px" width="24" height="24" viewBox="0 0 24 24"><g transform="translate(0.5 0.9000000000000057)"><path d="M5.81 7.17A7.85 7.85 0 1 1 6.75 17.83" fill="none" stroke="#a3a3a3" stroke-width="1.8"/><path d="M2.8 2.6H5.1V8.4H10.8V10.8H2.8Z" fill="#1e1e1e"/></g></svg>
<div class="t" style="left:2193px;top:205px;font-size:16px;line-height:16px;color:#7a7a7a;font-weight:normal;">Choose Yes or No</div>
<div class="t" style="left:2193px;top:251px;font-size:20px;line-height:20px;color:#6b6b6b;font-weight:bold;">Payment Plan in Place</div>
<svg style="position:absolute;left:2192px;top:291px" width="28" height="28"><circle cx="14.5" cy="14.300000000000011" r="12.2" fill="none" stroke="#6b6b6b" stroke-width="2.2"/></svg>
<div class="t" style="left:2233px;top:288px;font-size:19px;line-height:19px;color:#111;font-weight:normal;">Yes</div>
<svg style="position:absolute;left:2285px;top:291px" width="28" height="28"><circle cx="14.5" cy="14.300000000000011" r="12.2" fill="none" stroke="#ec6690" stroke-width="2.2"/><circle cx="14.5" cy="14.300000000000011" r="6.6" fill="#ec6690"/></svg>
<div class="t" style="left:2326px;top:288px;font-size:19px;line-height:19px;color:#111;font-weight:normal;">No</div>
<svg style="position:absolute;left:2366px;top:293px" width="24" height="24" viewBox="0 0 24 24"><g transform="translate(0.5 0.9000000000000341)"><path d="M5.81 7.17A7.85 7.85 0 1 1 6.75 17.83" fill="none" stroke="#a3a3a3" stroke-width="1.8"/><path d="M2.8 2.6H5.1V8.4H10.8V10.8H2.8Z" fill="#1e1e1e"/></g></svg>
<div class="t" style="left:2193px;top:331px;font-size:16px;line-height:16px;color:#7a7a7a;font-weight:normal;">Choose Yes or No</div>
<div class="t" style="left:2193px;top:376px;font-size:20px;line-height:20px;color:#6b6b6b;font-weight:bold;">OTO</div>
<svg style="position:absolute;left:2192px;top:416px" width="28" height="28"><circle cx="14.5" cy="14.300000000000011" r="12.2" fill="none" stroke="#6b6b6b" stroke-width="2.2"/></svg>
<div class="t" style="left:2233px;top:413px;font-size:19px;line-height:19px;color:#111;font-weight:normal;">Yes</div>
<svg style="position:absolute;left:2285px;top:416px" width="28" height="28"><circle cx="14.5" cy="14.300000000000011" r="12.2" fill="none" stroke="#ec6690" stroke-width="2.2"/><circle cx="14.5" cy="14.300000000000011" r="6.6" fill="#ec6690"/></svg>
<div class="t" style="left:2326px;top:413px;font-size:19px;line-height:19px;color:#111;font-weight:normal;">No</div>
<svg style="position:absolute;left:2366px;top:418px" width="24" height="24" viewBox="0 0 24 24"><g transform="translate(0.5 0.9000000000000341)"><path d="M5.81 7.17A7.85 7.85 0 1 1 6.75 17.83" fill="none" stroke="#a3a3a3" stroke-width="1.8"/><path d="M2.8 2.6H5.1V8.4H10.8V10.8H2.8Z" fill="#1e1e1e"/></g></svg>
<div class="t" style="left:2193px;top:456px;font-size:16px;line-height:16px;color:#7a7a7a;font-weight:normal;">Choose Yes or No</div>
<div class="t" style="left:2193px;top:501px;font-size:20px;line-height:20px;color:#6b6b6b;font-weight:bold;">First Responder</div>
<svg style="position:absolute;left:2192px;top:541px" width="28" height="28"><circle cx="14.5" cy="14.299999999999955" r="12.2" fill="none" stroke="#5060c2" stroke-width="2.2"/><circle cx="14.5" cy="14.299999999999955" r="6.6" fill="#5864bf"/></svg>
<div class="t" style="left:2233px;top:538px;font-size:19px;line-height:19px;color:#111;font-weight:normal;">Yes</div>
<svg style="position:absolute;left:2285px;top:541px" width="28" height="28"><circle cx="14.5" cy="14.299999999999955" r="12.2" fill="none" stroke="#6b6b6b" stroke-width="2.2"/></svg>
<div class="t" style="left:2326px;top:538px;font-size:19px;line-height:19px;color:#111;font-weight:normal;">No</div>
<svg style="position:absolute;left:2366px;top:543px" width="24" height="24" viewBox="0 0 24 24"><g transform="translate(0.5 0.8999999999999773)"><path d="M5.81 7.17A7.85 7.85 0 1 1 6.75 17.83" fill="none" stroke="#a3a3a3" stroke-width="1.8"/><path d="M2.8 2.6H5.1V8.4H10.8V10.8H2.8Z" fill="#1e1e1e"/></g></svg>
<div class="t" style="left:2193px;top:581px;font-size:16px;line-height:16px;color:#7a7a7a;font-weight:normal;">Choose Yes or No</div>
<div style="position:absolute;left:428px;top:233px;width:396px;height:76px;border:6px solid #e5352a;box-sizing:border-box"></div>
<div style="position:absolute;left:427px;top:352px;width:397px;height:78px;border:6px solid #e5352a;box-sizing:border-box"></div>
<div style="position:absolute;left:844px;top:359px;width:395px;height:76px;border:6px solid #e5352a;box-sizing:border-box"></div>
<div style="position:absolute;left:17px;top:589px;width:1223px;height:102px;border:6px solid #e5352a;box-sizing:border-box"></div>
<svg style="position:absolute;left:0px;top:160px" width="420" height="390" viewBox="0 0 1338 1242">
<defs>
<radialGradient id="face" cx="0.5" cy="0.45" r="0.58">
<stop offset="0" stop-color="#fbd86c"/>
<stop offset="0.5" stop-color="#f8c64c"/>
<stop offset="0.88" stop-color="#f2ac34"/>
<stop offset="1" stop-color="#ec9c2a"/>
</radialGradient>
<radialGradient id="blush" cx="0.5" cy="0.5" r="0.5">
<stop offset="0" stop-color="#ee8f28" stop-opacity="0.75"/>
<stop offset="1" stop-color="#ee8f28" stop-opacity="0"/>
</radialGradient>
<radialGradient id="iris" cx="0.42" cy="0.42" r="0.6">
<stop offset="0.4" stop-color="#a8c4ee"/>
<stop offset="0.7" stop-color="#5a74c8"/>
<stop offset="0.9" stop-color="#2c3a9a"/>
<stop offset="1" stop-color="#141c6a"/>
</radialGradient>
<linearGradient id="eyew" x1="0" y1="0" x2="0.3" y2="1">
<stop offset="0" stop-color="#ffffff"/>
<stop offset="0.6" stop-color="#f4f9fd"/>
<stop offset="1" stop-color="#cfe4f6"/>
</linearGradient>
<linearGradient id="teeth" x1="0" y1="0" x2="0" y2="1">
<stop offset="0" stop-color="#cfe2f6"/>
<stop offset="0.45" stop-color="#ffffff"/>
<stop offset="1" stop-color="#e4eef6"/>
</linearGradient>
</defs>
<ellipse cx="668" cy="616" rx="648" ry="594" fill="url(#face)" stroke="#d9782c" stroke-width="7"/>
<path d="M190 378 Q250 170 480 90 Q668 35 860 85 Q1060 160 1112 332 Q900 300 668 305 Q400 315 190 378Z" fill="#fde6a0" opacity="0.45"/>
<ellipse cx="240" cy="490" rx="95" ry="85" fill="url(#blush)"/>
<ellipse cx="1070" cy="500" rx="80" ry="75" fill="url(#blush)"/>
<!-- eyebrows -->
<path d="M345 202 Q450 112 585 74 Q614 74 614 120 Q480 130 345 202Z" fill="#8a5526"/>
<path d="M748 192 Q728 142 790 132 Q900 158 1042 250 Q920 220 748 192Z" fill="#8a5526"/>
<!-- left eye -->
<ellipse cx="455" cy="414" rx="172" ry="196" transform="rotate(11 455 414)" fill="#f3a936" opacity="0.8"/>
<ellipse cx="455" cy="414" rx="158" ry="182" transform="rotate(11 455 414)" fill="url(#eyew)" stroke="#0e0e0e" stroke-width="14"/>
<ellipse cx="455" cy="414" rx="158" ry="182" transform="rotate(11 455 414)" fill="none" stroke="#b8682a" stroke-width="15" stroke-dasharray="0 30 400 3000"/>
<circle cx="523" cy="460" r="71" fill="url(#iris)"/>
<circle cx="523" cy="462" r="41" fill="#080810"/>
<circle cx="508" cy="417" r="32" fill="#fff"/>
<circle cx="547" cy="497" r="16" fill="#fff"/>
<!-- right eye -->
<ellipse cx="837" cy="400" rx="170" ry="182" transform="rotate(6 837 400)" fill="#f3a936" opacity="0.8"/>
<ellipse cx="837" cy="400" rx="156" ry="168" transform="rotate(6 837 400)" fill="url(#eyew)" stroke="#0e0e0e" stroke-width="14"/>
<circle cx="801" cy="451" r="71" fill="url(#iris)"/>
<circle cx="801" cy="453" r="41" fill="#080810"/>
<circle cx="761" cy="412" r="32" fill="#fff"/>
<circle cx="827" cy="482" r="16" fill="#fff"/>
<path d="M785 588 Q900 535 1010 512 L1000 560 Q900 585 800 615Z" fill="#f7c54e"/>
<path d="M790 580 Q930 528 1058 502" fill="none" stroke="#d9782c" stroke-width="7"/>
<!-- mouth -->
<path d="M371 958 C470 850 620 740 800 672 C880 645 940 625 990 626 Q1050 632 1055 700 L1058 888 Q940 842 787 841 Q600 847 441 919 Q400 940 371 958Z" fill="url(#teeth)" stroke="#d06a22" stroke-width="7"/>
<path d="M502 831 Q672 800 864 773 Q940 764 1000 766" fill="none" stroke="#7c8894" stroke-width="8"/>
<path d="M972 769 Q1020 745 1052 727 L1056 823 Q1030 800 1018 796 Q995 780 972 769Z" fill="#1c1010"/>
<path d="M371 954 Q430 880 494 823 L506 839 Q470 870 441 912 Q400 940 371 954Z" fill="#1c1010"/>
<path d="M337 950 Q322 1000 364 1000 Q410 990 456 958" fill="none" stroke="#c86a26" stroke-width="8"/>
<path d="M575 912 Q672 889 825 885" fill="none" stroke="#e0902c" stroke-width="10" opacity="0.7"/>
</svg>
<!-- eye icon -->
<svg style="position:absolute;left:1326px;top:36px" width="24" height="16" viewBox="0 0 24 16">
<path d="M1.3 8Q6 1.2 12 1.2Q18 1.2 22.7 8Q18 14.8 12 14.8Q6 14.8 1.3 8Z" fill="#5a62a6"/>
<circle cx="12" cy="8" r="5" fill="#8e9bf5"/>
<circle cx="12" cy="8" r="3.6" fill="#16162a"/>
<circle cx="10.3" cy="6.4" r="1.3" fill="#8e9bf5"/>
</svg>
<!-- avea logo -->
<svg style="position:absolute;left:1300px;top:10px" width="220" height="80" viewBox="0 0 2476 900">
<rect x="1025" y="113" width="1060" height="537" fill="#ffffff"/>
<path d="M1058 300 Q1080 270 1135 272 L1295 330 L1135 402 Q1075 400 1058 360Z" fill="#eca24c"/>
<path d="M1185 210 Q1215 185 1240 215 L1270 290 L1200 250 Q1170 235 1185 210Z" fill="#86a4a4"/>
<path d="M1275 160 Q1320 110 1370 150 Q1390 180 1370 215 L1320 320 L1272 200 Q1265 180 1275 160Z" fill="#a2cbcb"/>
<path d="M1300 368 L1215 590 Q1180 630 1110 640 Q1050 620 1025 565 Q1040 480 1080 460Z" fill="#a2cbcb"/>
<text x="1335" y="475" font-family="Liberation Sans" font-weight="bold" font-size="345" fill="#a2cbcb" textLength="735" lengthAdjust="spacingAndGlyphs">Avea</text>
<text x="1330" y="550" font-family="Liberation Sans" font-weight="bold" font-size="48" fill="#a2cbcb" textLength="740" lengthAdjust="spacingAndGlyphs">PRACTICE SOLUTIONS</text>
</svg>
<!-- trash -->
<svg style="position:absolute;left:1500px;top:10px" width="220" height="80" viewBox="0 0 2476 900">
<rect x="312" y="290" width="183" height="24" rx="8" fill="#140805"/>
<rect x="375" y="275" width="60" height="22" rx="10" fill="#140805"/>
<path d="M325 322H480V465Q480 485 460 485H345Q325 485 325 465Z" fill="#9b3f21"/>
<rect x="356" y="350" width="13" height="95" fill="#140805"/>
<rect x="394" y="350" width="13" height="95" fill="#140805"/>
<rect x="437" y="350" width="13" height="95" fill="#140805"/>
<!-- archive box -->
<rect x="1848" y="292" width="210" height="34" rx="12" fill="#1e1e1e"/>
<path d="M1860 345H2045V455Q2045 472 2028 472H1877Q1860 472 1860 455Z" fill="#1e1e1e"/>
<rect x="1925" y="370" width="56" height="16" rx="6" fill="#fafafa"/>
</svg>
<!-- sms + archive file -->
<svg style="position:absolute;left:1700px;top:10px" width="300" height="80" viewBox="0 0 2476 660">
<path d="M455 217C530 217 528 268 528 272C528 320 490 332 455 332C440 332 428 330 418 326L382 343L395 312C385 302 380 290 380 272C380 250 395 217 455 217Z" fill="none" stroke="#161616" stroke-width="14" stroke-linejoin="round"/>
<circle cx="420" cy="276" r="9" fill="#161616"/><circle cx="455" cy="276" r="9" fill="#161616"/><circle cx="490" cy="276" r="9" fill="#161616"/>
<path d="M1400 210H1455L1500 255V345Q1500 352 1492 352H1400Q1392 352 1392 345V218Q1392 210 1400 210Z" fill="none" stroke="#161a05" stroke-width="14" stroke-linejoin="round"/>
<path d="M1455 210V255H1500" fill="none" stroke="#161a05" stroke-width="10"/>
<path d="M1430 222V300" stroke="#161a05" stroke-width="8" stroke-dasharray="12 8"/>
<circle cx="1430" cy="315" r="11" fill="none" stroke="#161a05" stroke-width="8"/>
</svg>
<!-- upload icon -->
<svg style="position:absolute;left:1990px;top:10px" width="270" height="80" viewBox="0 0 2476 734">
<path d="M295 228L352 290H322V350H268V290H238Z" fill="#fff"/>
<path d="M208 345H268V362H322V345H380V385Q380 398 367 398H221Q208 398 208 385Z" fill="#fff"/>
<circle cx="335" cy="380" r="6" fill="#4450b0"/><circle cx="355" cy="380" r="6" fill="#4450b0"/>
</svg>
<!-- save icon -->
<svg style="position:absolute;left:2250px;top:10px" width="226" height="80" viewBox="0 0 2476 876">
<path d="M268 285H398L430 318V445Q430 462 413 462H268Q251 462 251 445V302Q251 285 268 285Z" fill="#fff"/>
<rect x="280" y="310" width="100" height="45" fill="#4450b0"/>
<circle cx="342" cy="410" r="24" fill="#8f97d8"/>
</svg>
<!-- id thumbnail -->
<div style="position:absolute;left:1093px;top:20px;width:71px;height:48px;background:#f7f9fa;border-radius:2px"></div>
<svg style="position:absolute;left:1095px;top:24px" width="66" height="41" viewBox="0 0 66 41">
<defs><linearGradient id="idg" x1="0" y1="0" x2="1" y2="0.3"><stop offset="0" stop-color="#a3b2c8"/><stop offset="0.35" stop-color="#b9bccb"/><stop offset="0.6" stop-color="#c6c0c6"/><stop offset="1" stop-color="#cdbdbb"/></linearGradient></defs>
<rect x="0" y="0" width="66" height="41" rx="1.5" fill="url(#idg)"/>
<path d="M30 0L42 0L52 41L40 41Z" fill="#d6b8b0" opacity="0.55"/>
<path d="M38 18L52 14L56 41L42 41Z" fill="#a9c3dc" opacity="0.6"/>
<path d="M52 8Q60 6 64 12L64 26Q58 28 52 22Z" fill="#d9c0c6" opacity="0.6"/>
<text x="2.5" y="6.6" font-family="Liberation Sans" font-weight="bold" font-style="italic" font-size="6.2" fill="#2d6b3a" textLength="19.5" lengthAdjust="spacingAndGlyphs">Florida</text>
<ellipse cx="13" cy="9.5" rx="4.5" ry="3.2" fill="#7ccc58" opacity="0.7"/>
<path d="M5 33Q6 28 12 28Q19 28 21 33Z" fill="#3a4058"/>
<path d="M11 28.5L12.5 33L14 28.5Z" fill="#3b5aa0"/>
<ellipse cx="11.3" cy="21.5" rx="6" ry="7.6" fill="#c09478"/>
<path d="M5 18Q5.5 11.5 11.5 11.5Q18 11.5 18 18Q16 14.5 11.5 15Q7 15 5 18Z" fill="#74381f"/>
<rect x="23" y="9.5" width="26" height="1.6" fill="#4a3a44" opacity="0.65"/>
<rect x="23" y="12.5" width="10" height="1.1" fill="#4a3a44" opacity="0.5"/>
<rect x="23" y="15.2" width="22" height="1.3" fill="#4a3a44" opacity="0.55"/>
<rect x="23" y="18" width="20" height="1.2" fill="#4a3a44" opacity="0.5"/>
<rect x="23" y="20.6" width="24" height="1.4" fill="#3a4fa0" opacity="0.6"/>
<rect x="23" y="23.5" width="22" height="1.2" fill="#4a3a44" opacity="0.45"/>
<rect x="23" y="26" width="22" height="1.2" fill="#4a3a44" opacity="0.45"/>
<ellipse cx="57.5" cy="28" rx="4.8" ry="5" fill="#d2a23a"/>
<ellipse cx="57.5" cy="27" rx="2.6" ry="2.4" fill="#e8c868" opacity="0.8"/>
<circle cx="58.5" cy="4.2" r="2.2" fill="none" stroke="#8a9a2a" stroke-width="1.1"/>
<rect x="5" y="35.5" width="40" height="1.5" fill="#3a4580" opacity="0.45"/>
<rect x="53.5" y="35.5" width="9" height="1.6" fill="#2c3c9a" opacity="0.8"/>
<rect x="56" y="37.3" width="6" height="0.9" fill="#d03030" opacity="0.8"/>
</svg>

</div></body></html>
